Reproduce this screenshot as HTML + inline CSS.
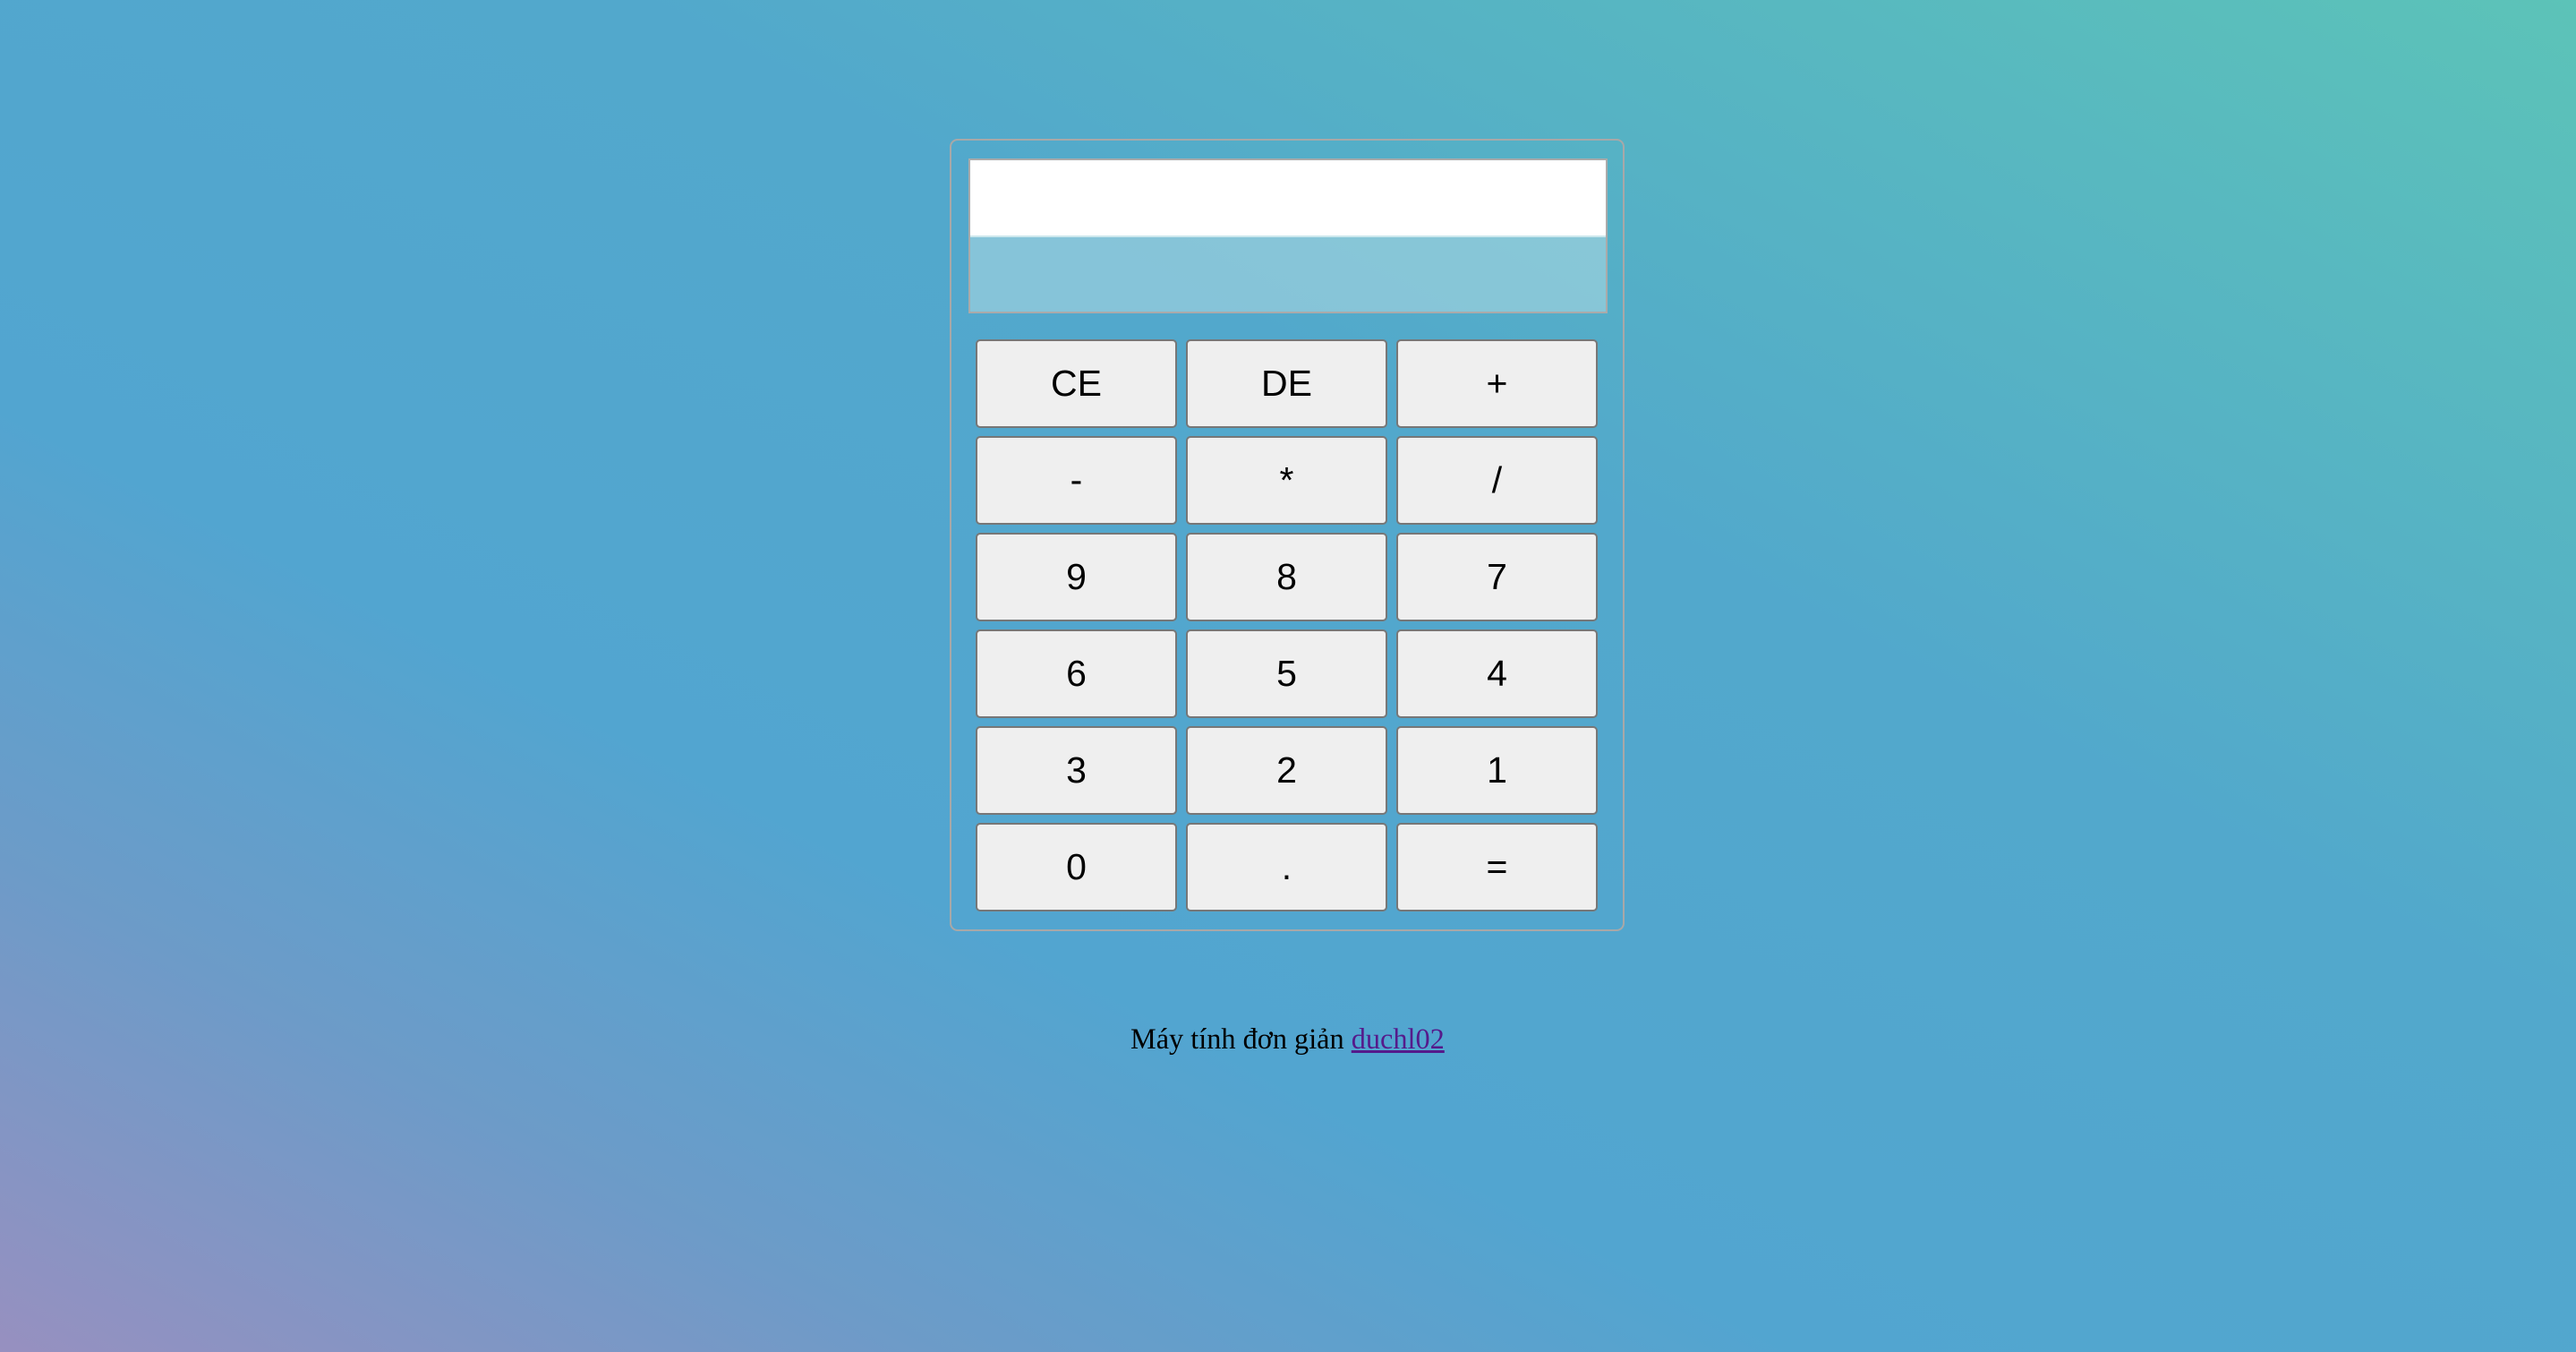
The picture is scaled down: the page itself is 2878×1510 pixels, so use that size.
<!DOCTYPE html>
<html><head><meta charset="utf-8"><style>
html,body{margin:0;padding:0;width:2878px;height:1510px;overflow:hidden}
body{background:linear-gradient(to top right,#9790c0 0%,#6d9bc8 18%,#52a5d0 35%,#52a8cc 62%,#5cc3b8 100%);position:relative;font-family:"Liberation Sans",sans-serif}
.calc{position:absolute;left:1061px;top:155px;width:750px;height:881px;border:2px solid #a8a8a8;border-radius:9px}
.d1{position:absolute;left:1082px;top:177px;width:710px;height:86px;background:#fff;border:2px solid #aaa;border-bottom:none}
.d2{position:absolute;left:1082px;top:263px;width:710px;height:85px;background:rgba(170,215,225,0.6);border:2px solid #aaa;border-top:none}
.b{position:absolute;width:221px;height:95px;background:#efefef;border:2px solid #777;border-radius:5px;display:flex;align-items:center;justify-content:center;font-size:41px;color:#000}
.f{position:absolute;left:1263px;top:1142px;font-family:"Liberation Serif",serif;font-size:32.3px;color:#000;white-space:nowrap}
.f a{color:#551a8b;text-decoration:underline}
</style></head><body>
<div class="calc"></div>
<div class="d1"></div><div class="d2"></div>
<div class="b" style="left:1090px;top:379px">CE</div>
<div class="b" style="left:1325px;top:379px">DE</div>
<div class="b" style="left:1560px;top:379px">+</div>
<div class="b" style="left:1090px;top:487px">-</div>
<div class="b" style="left:1325px;top:487px">*</div>
<div class="b" style="left:1560px;top:487px">/</div>
<div class="b" style="left:1090px;top:595px">9</div>
<div class="b" style="left:1325px;top:595px">8</div>
<div class="b" style="left:1560px;top:595px">7</div>
<div class="b" style="left:1090px;top:703px">6</div>
<div class="b" style="left:1325px;top:703px">5</div>
<div class="b" style="left:1560px;top:703px">4</div>
<div class="b" style="left:1090px;top:811px">3</div>
<div class="b" style="left:1325px;top:811px">2</div>
<div class="b" style="left:1560px;top:811px">1</div>
<div class="b" style="left:1090px;top:919px">0</div>
<div class="b" style="left:1325px;top:919px">.</div>
<div class="b" style="left:1560px;top:919px">=</div>
<div class="f">Máy tính đơn giản <a>duchl02</a></div>
</body></html>
